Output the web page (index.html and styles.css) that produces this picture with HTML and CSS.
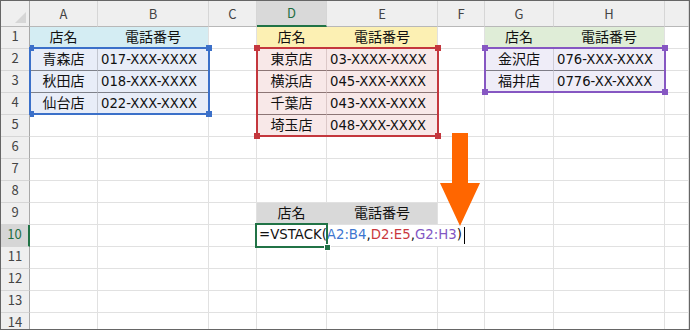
FILE: index.html
```html
<!DOCTYPE html>
<html lang="ja">
<head>
<meta charset="utf-8">
<link rel="stylesheet" href="styles.css">
</head>
<body>
<div class="frame">
  <div class="sheet">
    <!-- header row -->
    <div class="c corner"><span class="tri"></span></div>
    <div class="c ch">A</div><div class="c ch">B</div><div class="c ch">C</div>
    <div class="c ch sel">D</div><div class="c ch">E</div><div class="c ch">F</div>
    <div class="c ch">G</div><div class="c ch">H</div><div class="c ch"></div>
    <!-- row 1 -->
    <div class="c rh">1</div>
    <div class="c ctr hc joined">店名</div><div class="c ctr hc">電話番号</div><div class="c"></div>
    <div class="c ctr hy joined">店名</div><div class="c ctr hy">電話番号</div><div class="c"></div>
    <div class="c ctr hg joined">店名</div><div class="c ctr hg">電話番号</div><div class="c"></div>
    <!-- row 2 -->
    <div class="c rh">2</div>
    <div class="c ctr tb split">青森店</div><div class="c num tb">017-XXX-XXXX</div><div class="c"></div>
    <div class="c ctr tr split">東京店</div><div class="c num tr">03-XXXX-XXXX</div><div class="c"></div>
    <div class="c ctr tp split">金沢店</div><div class="c num tp">076-XXX-XXXX</div><div class="c"></div>
    <!-- row 3 -->
    <div class="c rh">3</div>
    <div class="c ctr tb split">秋田店</div><div class="c num tb">018-XXX-XXXX</div><div class="c"></div>
    <div class="c ctr tr split">横浜店</div><div class="c num tr">045-XXX-XXXX</div><div class="c"></div>
    <div class="c ctr tp split">福井店</div><div class="c num tp">0776-XX-XXXX</div><div class="c"></div>
    <!-- row 4 -->
    <div class="c rh">4</div>
    <div class="c ctr tb split">仙台店</div><div class="c num tb">022-XXX-XXXX</div><div class="c"></div>
    <div class="c ctr tr split">千葉店</div><div class="c num tr">043-XXX-XXXX</div><div class="c"></div>
    <div class="c"></div><div class="c"></div><div class="c"></div>
    <!-- row 5 -->
    <div class="c rh">5</div>
    <div class="c"></div><div class="c"></div><div class="c"></div>
    <div class="c ctr tr split">埼玉店</div><div class="c num tr">048-XXX-XXXX</div><div class="c"></div>
    <div class="c"></div><div class="c"></div><div class="c"></div>
    <!-- row 6 -->
    <div class="c rh">6</div>
    <div class="c"></div><div class="c"></div><div class="c"></div><div class="c"></div><div class="c"></div>
    <div class="c"></div><div class="c"></div><div class="c"></div><div class="c"></div>
    <!-- row 7 -->
    <div class="c rh">7</div>
    <div class="c"></div><div class="c"></div><div class="c"></div><div class="c"></div><div class="c"></div>
    <div class="c"></div><div class="c"></div><div class="c"></div><div class="c"></div>
    <!-- row 8 -->
    <div class="c rh">8</div>
    <div class="c"></div><div class="c"></div><div class="c"></div><div class="c"></div><div class="c"></div>
    <div class="c"></div><div class="c"></div><div class="c"></div><div class="c"></div>
    <!-- row 9 -->
    <div class="c rh">9</div>
    <div class="c"></div><div class="c"></div><div class="c"></div>
    <div class="c ctr gr joined">店名</div><div class="c ctr gr">電話番号</div>
    <div class="c"></div><div class="c"></div><div class="c"></div><div class="c"></div>
    <!-- row 10 -->
    <div class="c rh sel">10</div>
    <div class="c"></div><div class="c"></div><div class="c"></div>
    <div class="c formula">=VSTACK(<span class="rb">A2:B4</span>,<span class="rr">D2:E5</span>,<span class="rp">G2:H3</span>)</div>
    <div class="c"></div><div class="c"></div><div class="c"></div>
    <!-- row 11 -->
    <div class="c rh">11</div>
    <div class="c"></div><div class="c"></div><div class="c"></div><div class="c"></div><div class="c"></div>
    <div class="c"></div><div class="c"></div><div class="c"></div><div class="c"></div>
    <!-- row 12 -->
    <div class="c rh">12</div>
    <div class="c"></div><div class="c"></div><div class="c"></div><div class="c"></div><div class="c"></div>
    <div class="c"></div><div class="c"></div><div class="c"></div><div class="c"></div>
    <!-- row 13 -->
    <div class="c rh">13</div>
    <div class="c"></div><div class="c"></div><div class="c"></div><div class="c"></div><div class="c"></div>
    <div class="c"></div><div class="c"></div><div class="c"></div><div class="c"></div>
    <!-- row 14 -->
    <div class="c rh">14</div>
    <div class="c"></div><div class="c"></div><div class="c"></div><div class="c"></div><div class="c"></div>
    <div class="c"></div><div class="c"></div><div class="c"></div><div class="c"></div>
  </div>

  <!-- range reference outlines -->
  <div class="range blue"><i class="hd tl"></i><i class="hd tr"></i><i class="hd bl"></i><i class="hd br"></i></div>
  <div class="range red"><i class="hd tl"></i><i class="hd tr"></i><i class="hd bl"></i><i class="hd br"></i></div>
  <div class="range purple"><i class="hd tl"></i><i class="hd tr"></i><i class="hd bl"></i><i class="hd br"></i></div>

  <!-- active cell -->
  <div class="active"><i class="fill"></i></div>
  <div class="caret"></div>

  <!-- arrow -->
  <svg class="arrow" width="40" height="94" viewBox="0 0 40 94">
    <path d="M12 0 H28 V50 H40 L20 93 L0 50 H12 Z" fill="#ff6600"/>
  </svg>
</div>
</body>
</html>
```

FILE: styles.css
```css
html, body {
  margin: 0;
  padding: 0;
  background: #ffffff;
}

body {
  font-family: "Noto Sans CJK JP", "Noto Sans", sans-serif;
  font-size: 14px;
  color: #111;
}

.frame {
  position: relative;
  width: 690px;
  height: 330px;
  box-sizing: border-box;
  border: 1px solid #666;
  overflow: hidden;
  background: #fff;
}

.sheet {
  display: grid;
  grid-template-columns: 29px 68px 111px 48px 70px 111px 47px 69px 111px 24px;
  grid-template-rows: 26px repeat(14, 22px);
}

.c {
  box-sizing: border-box;
  border-right: 1px solid #e1e1e1;
  border-bottom: 1px solid #e1e1e1;
  display: flex;
  align-items: center;
  white-space: nowrap;
  line-height: 20px;
  min-width: 0;
}

.ctr {
  justify-content: center;
  padding-bottom: 4px;
}
.num {
  padding-left: 3px;
  font-family: "DejaVu Sans", "Noto Sans CJK JP", sans-serif;
  font-size: 13.2px;
}

/* headers */
.corner {
  position: relative;
  background: #efefef;
  border-right-color: #a8a8a8;
  border-bottom-color: #b8b8b8;
}
.tri {
  position: absolute;
  right: 3px;
  bottom: 3px;
  width: 0;
  height: 0;
  border-left: 11px solid transparent;
  border-bottom: 11px solid #d6d6d6;
}

.ch {
  justify-content: center;
  background: #efefef;
  color: #444;
  border-right-color: #d6d6d6;
  border-bottom-color: #b8b8b8;
  font-size: 13px;
}
.ch.sel {
  background: #d9d9d9;
  color: #1f6e43;
  border-bottom: 2px solid #217346;
}

.rh {
  justify-content: center;
  background: #efefef;
  color: #444;
  border-right-color: #a8a8a8;
  border-bottom-color: #d6d6d6;
  font-size: 13px;
  padding-bottom: 4px;
}
.rh.sel {
  background: #d6d6d6;
  color: #1f6e43;
  border-right: 2px solid #217346;
}

/* table header fills */
.hc { background: #d4edf3; border-bottom-color: #d4edf3; }
.hy { background: #fcf0b3; border-bottom-color: #fcf0b3; }
.hg { background: #dfedd7; border-bottom-color: #dfedd7; }
.hc.joined { border-right-color: #d4edf3; }
.hy.joined { border-right-color: #fcf0b3; }
.hg.joined { border-right-color: #dfedd7; }

/* table bodies (range tint) */
.tb { background: #e8edf8; border-bottom-color: #7e818a; }
.tb.split { border-right-color: #c2c6d0; }
.tr { background: #f8e8e8; border-bottom-color: #8c7575; }
.tr.split { border-right-color: #dcc8c8; }
.tp { background: #efedf8; border-bottom-color: #7f7d88; }
.tp.split { border-right-color: #cfcdd8; }

/* row 9 grey header */
.gr { background: #d9d9d9; }
.gr.joined { border-right-color: #d9d9d9; }

/* formula */
.formula {
  grid-column: span 3;
  padding-left: 2px;
  padding-bottom: 1px;
  color: #111;
  font-family: "DejaVu Sans", "Noto Sans CJK JP", sans-serif;
  font-size: 13.3px;
}
.rb { color: #3d76cf; }
.rr { color: #c9373c; }
.rp { color: #8256c3; }

/* range outlines (overlays) */
.range {
  position: absolute;
  box-sizing: border-box;
  border: 2px solid;
}
.range.blue   { left: 28px;  top: 46px; width: 181px; height: 68px; border-color: #3b70c9; }
.range.red    { left: 255px; top: 46px; width: 183px; height: 90px; border-color: #c4373d; }
.range.purple { left: 483px; top: 46px; width: 182px; height: 46px; border-color: #8657c2; }

.hd {
  position: absolute;
  width: 6px;
  height: 6px;
}
.blue .hd   { background: #3b70c9; }
.red .hd    { background: #c4373d; }
.purple .hd { background: #8657c2; }
.hd.tl { left: -4px;  top: -4px; }
.hd.tr { right: -4px; top: -4px; }
.hd.bl { left: -4px;  bottom: -4px; }
.hd.br { right: -4px; bottom: -4px; }
.blue .hd.tl, .blue .hd.bl { left: -1px; width: 4px; }

/* active cell */
.active {
  position: absolute;
  left: 254px;
  top: 222px;
  width: 73px;
  height: 25px;
  box-sizing: border-box;
  border: 2px solid #217346;
}
.fill {
  position: absolute;
  right: -5px;
  bottom: -5px;
  width: 5px;
  height: 5px;
  background: #217346;
  border: 1px solid #fff;
}

.caret {
  position: absolute;
  left: 463px;
  top: 226px;
  width: 1px;
  height: 17px;
  background: #000;
}

.arrow {
  position: absolute;
  left: 439px;
  top: 132px;
}
```
